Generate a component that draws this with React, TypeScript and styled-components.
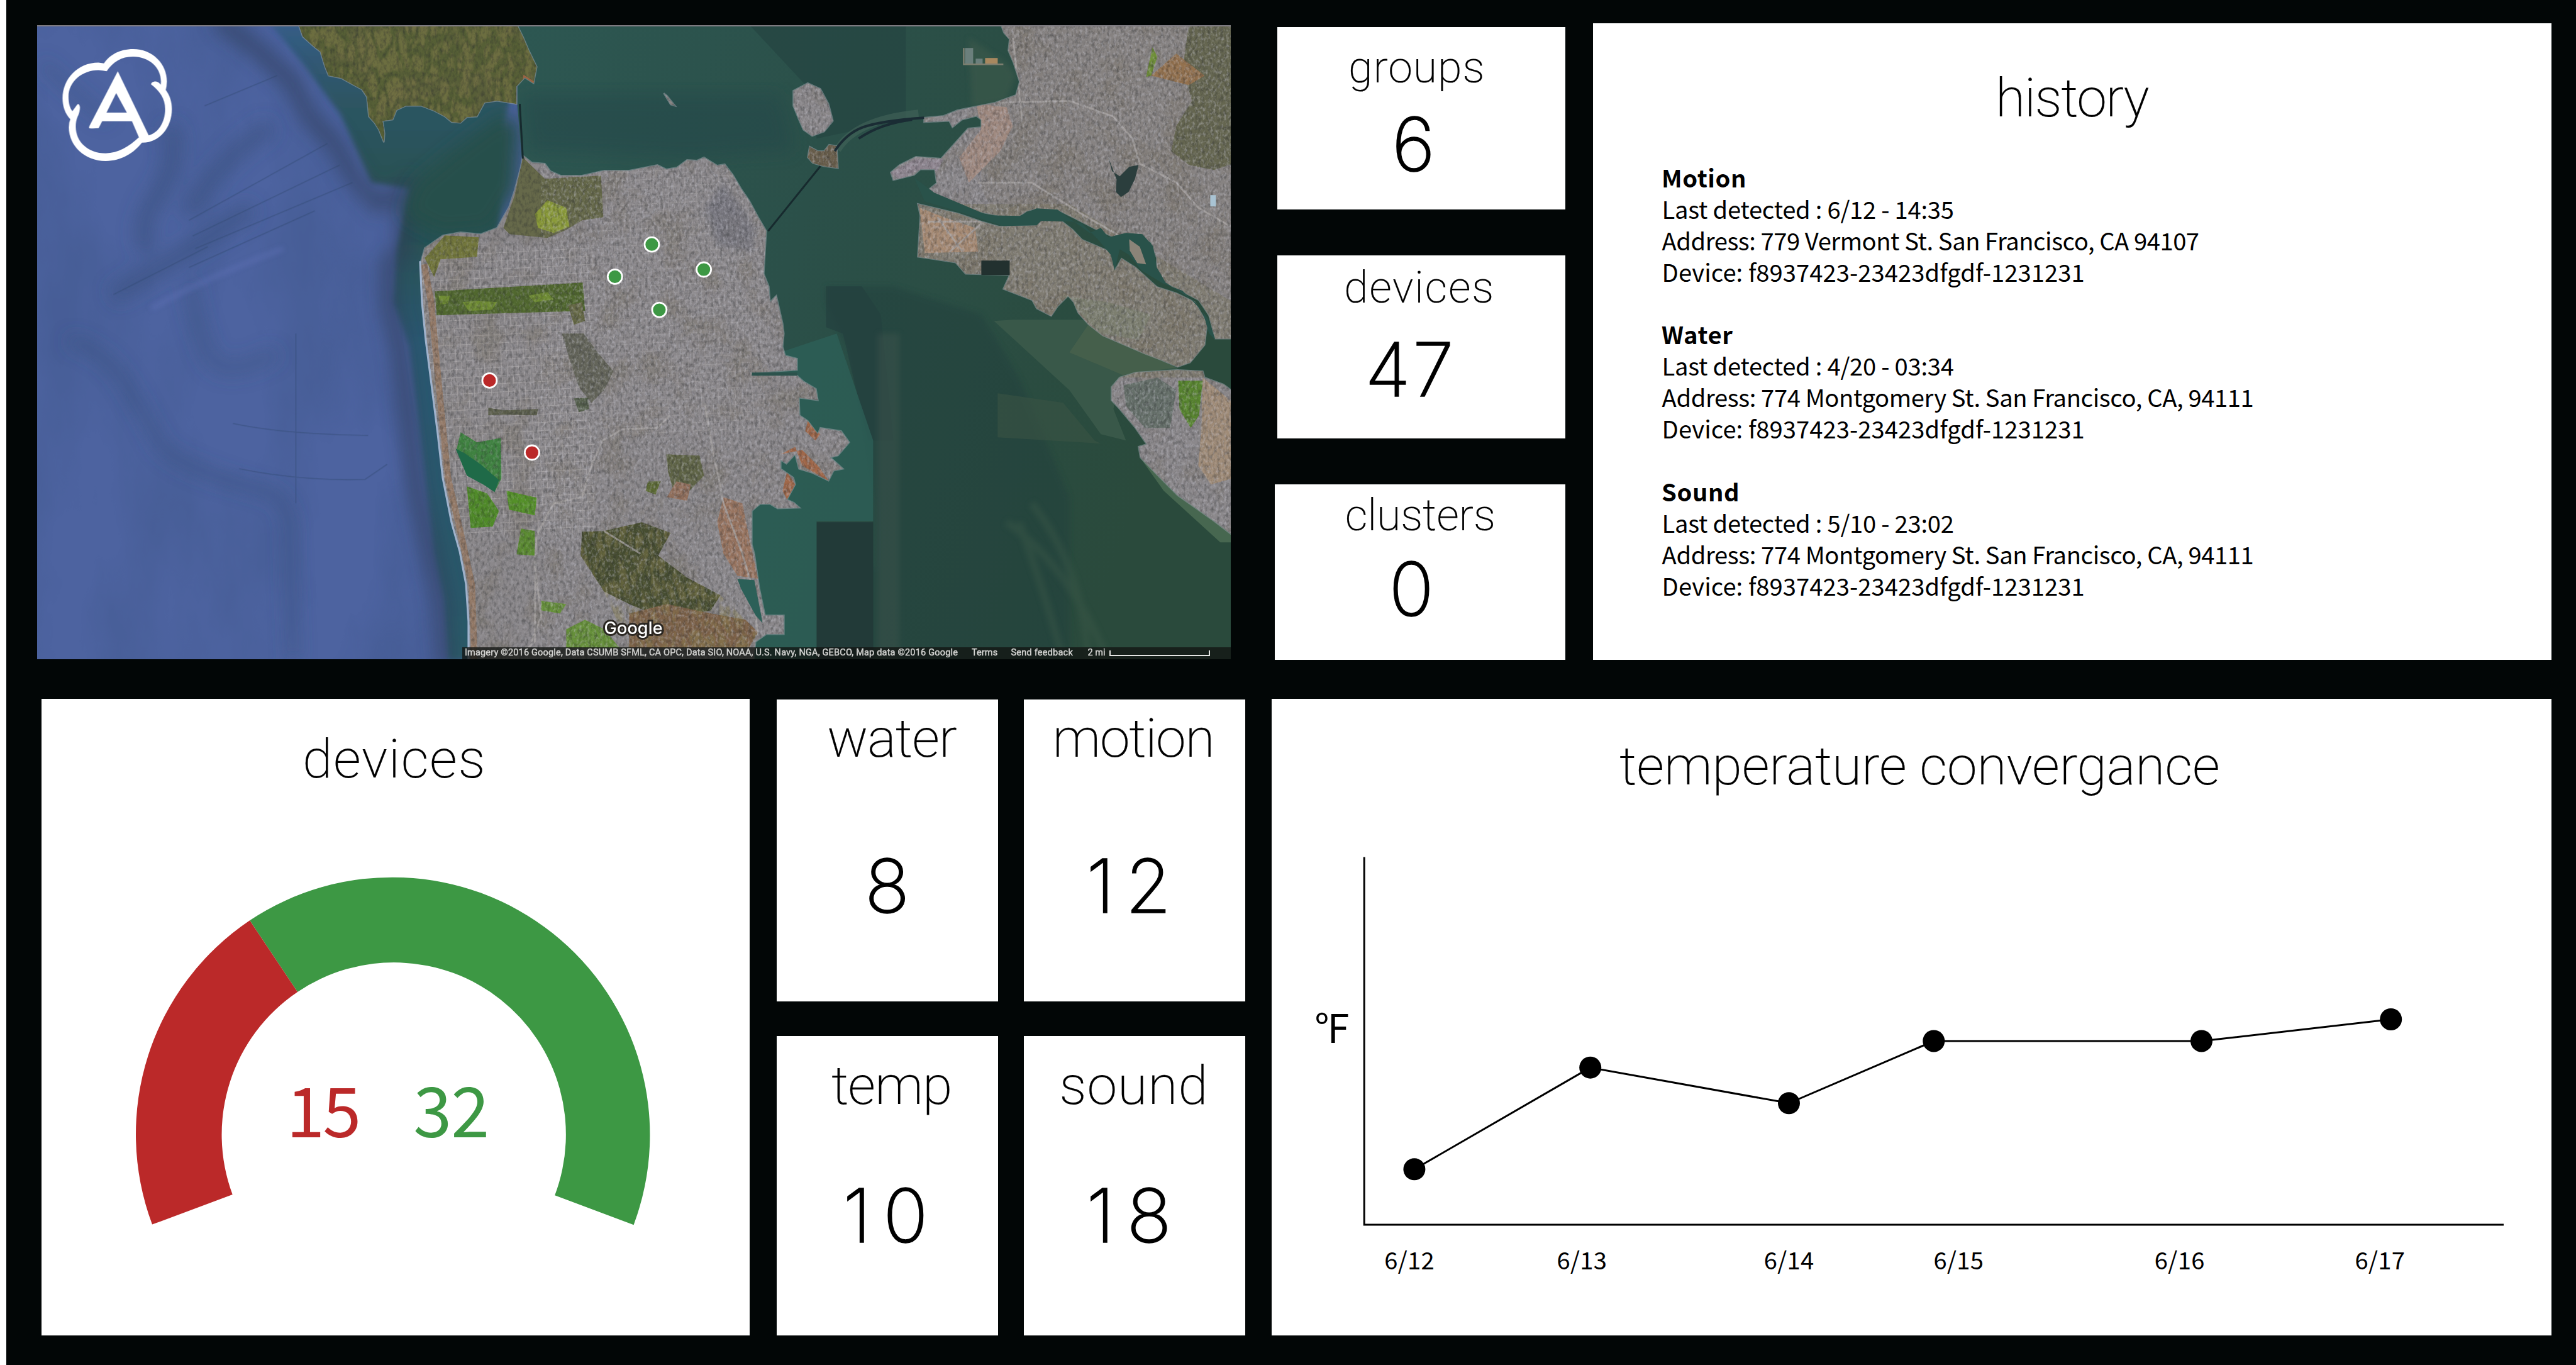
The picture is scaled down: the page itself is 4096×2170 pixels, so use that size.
import React from "react";
import styled, { createGlobalStyle } from "styled-components";

const INK = "#000000";
const FRAME = "#020606";
const RED = "#bb2929";
const GREEN = "#3d9844";
const THIN = `Roboto, "Liberation Sans", sans-serif`;
const BODY = `"Noto Sans CJK SC", "Open Sans", sans-serif`;

const GlobalStyle = createGlobalStyle`
  * { box-sizing: border-box; }
  html, body { margin: 0; padding: 0; background: #fff; }
  svg { display: block; }
`;

/* ---------- layout ---------- */

const Page = styled.main`
  width: 4096px;
  height: 2170px;
  overflow: hidden;
  display: flex;
  flex-direction: column;
  gap: 61.7px;
  padding: 37.4px 39.1px 0 48.6px;
  border-left: 10px solid #fff;
  background: ${FRAME};
  color: ${INK};
`;

const TopRow = styled.section`
  display: grid;
  grid-template-columns: 1898.5px 532.1px 1fr;
  height: 1011.7px;
`;

const BottomRow = styled.section`
  display: grid;
  grid-template-columns: 1125.7px 745.7px 2035.3px;
  column-gap: 42px;
  height: 1012px;
  padding-left: 7.6px;
`;

const Card = styled.article`
  display: flex;
  flex-direction: column;
  min-width: 0;
  background: #fff;
`;

const StatColumn = styled.div`
  display: flex;
  flex-direction: column;
  justify-content: space-between;
  padding: 5.8px 0 0 70px;
`;

const StatCard = styled(Card)<{ $height: number; $inset: number }>`
  height: ${p => p.$height}px;
  margin-left: ${p => p.$inset}px;
`;

const HistoryCard = styled(Card)`
  margin-left: 43.9px;
`;

const TileGrid = styled.div`
  display: grid;
  grid-template-columns: 352px 352px;
  grid-template-rows: 480px 476px;
  justify-content: space-between;
  align-content: space-between;
  padding: 1px 0 0 1px;
`;

/* ---------- type ---------- */

const Label = styled.h2<{ $top: number; $left: number; $track?: number; $small?: boolean }>`
  margin: ${p => p.$top}px 0 0 ${p => p.$left}px;
  font: 200 ${p => (p.$small ? 70 : 86)}px/1 ${THIN};
  letter-spacing: ${p => p.$track ?? 0}px;
  -webkit-text-stroke: 0.2px ${INK};
  white-space: nowrap;
`;

const Value = styled.p<{ $top: number; $left: number; $track: number }>`
  margin: ${p => p.$top}px 0 0 ${p => p.$left}px;
  font: 250 118px/1 Inter, "Liberation Sans", sans-serif;
  letter-spacing: ${p => p.$track}px;
  -webkit-text-stroke: 1.6px ${INK};
  white-space: nowrap;
`;

const EventList = styled.ul`
  list-style: none;
  display: flex;
  flex-direction: column;
  gap: 49.93px;
  margin: 57.4px 0 0 109.5px;
  padding: 0;
`;

const Event = styled.li`
  font: 400 38.2px/49.93px ${BODY};
  white-space: nowrap;
`;

const EventName = styled.h3`
  margin: 0 0 0 -0.5px;
  font-size: inherit;
  font-weight: 700;
  letter-spacing: 0.6px;
`;

const EventLine = styled.p<{ $track: number }>`
  margin: 0;
  letter-spacing: ${p => p.$track}px;
`;

/* ---------- map ---------- */

const MapPanel = styled.div`
  position: relative;
  height: 1007.8px;
  margin-top: 2.4px;
  overflow: hidden;
  border-top: 2px solid #7d7a80;
  background: #4d639f;
`;

const MapArt = styled.svg`
  position: absolute;
  inset: -2px 0 0 0;
  width: 1898.5px;
  height: 1007.8px;
`;

const MapFooter = styled.div`
  position: absolute;
  right: 0;
  bottom: 0;
  width: 1221.7px;
  height: 18.3px;
  display: flex;
  align-items: center;
  padding-left: 3.5px;
  background: rgba(18, 20, 18, 0.78);
  color: #d4d4d2;
  font: 400 14.5px/18px Roboto, sans-serif;
  -webkit-text-stroke: 0.4px #d4d4d2;
  white-space: nowrap;
`;

const Credit = styled.span`
  width: 806px;
  letter-spacing: 0.19px;
`;
const Terms = styled.span`
  width: 62.6px;
  letter-spacing: 0.13px;
`;
const Feedback = styled.span`
  width: 122px;
  letter-spacing: 0.23px;
`;
const Scale = styled.span`
  width: 34px;
`;
const ScaleBar = styled.span`
  width: 160px;
  height: 9px;
  border: 2px solid #e4e4e2;
  border-top: 0;
`;

const MapBrand = styled.span`
  position: absolute;
  left: 902px;
  top: 943px;
  font: 500 27px/1 Inter, sans-serif;
  letter-spacing: 0.15px;
  color: #fff;
  paint-order: stroke fill;
  -webkit-text-stroke: 6px #2b2722;
`;

const SF =
  "M831 247L828 264 818 302 809 329 790 362 764 372 732 369 704 374 675 394 669 415 672 480 678 540 688 618 697 689 705 759 719 830 732 876 742 928 746 988 746 1048H1198L1201 1020 1218 1008H1246V978H1216L1207 935 1199 880 1195 865V812L1208 801H1224L1236 808 1271 807 1262 799 1251 794 1264 770 1261 759 1241 745V731L1250 737 1264 722 1270 745 1290 751 1317 764 1325 748 1340 745 1320 727 1332 724 1350 703 1337 685 1304 680 1300 690 1284 669 1271 660 1270 632 1300 636 1297 618 1277 606 1267 597 1201 596V592L1267 588V570L1248 565 1244 551 1246 530 1244 514 1234 470 1224 480 1222 455 1214 435 1218 367 1205 345 1191 319 1178 300 1165 278 1152 261 1140 263 1119 250 1108 255 1092 254 1076 266 1059 269 1045 262 1000 271 960 271 925 279 891 279 875 272 866 260 845 258Z";
const MARIN =
  "M474 38L481 58 500 75 509 82 516 105 522 120 542 124 560 134 575 142 583 154 586 185 595 195 602 206 610 226 611 212 608 192 624 190 630 175 645 168 669 168 690 176 707 185 718 194 732 195 742 186 758 185 770 163 790 160 821 165 821 137 834 123 848 132 853 106 840 79 831 58 821 38Z";
const EAST =
  "M1591 38L1596 52 1605 62 1603 80 1611 99 1621 130 1615 151 1582 163 1522 175 1500 184 1469 187V194L1509 192 1514 202 1529 190 1552 184 1560 190V202L1539 204 1496 252 1456 249 1430 262 1416 274 1420 286 1453 278 1463 269 1486 269 1489 291 1469 307 1510 322 1555 336 1590 343 1621 343 1632 335 1648 331 1681 333 1707 346 1740 363 1780 381 1813 377 1830 385 1839 410V425L1853 449 1906 477 1922 501 1932 538H1960V38Z";
const ALAMEDA =
  "M1459 324L1522 339 1560 352 1588 360 1648 358 1654 350 1687 351 1705 365 1720 381 1767 401 1773 429 1783 411 1805 425 1839 456 1870 466 1899 480 1919 514 1915 548 1892 576 1872 583 1846 572 1820 562 1753 533 1730 515 1714 497 1707 480 1698 470 1681 487 1671 502 1648 490 1641 477 1595 459 1605 437 1535 435 1519 417 1459 408 1463 343Z";
const AIRPORT =
  "M1767 615L1780 600 1806 592 1872 588 1912 590 1915 600 1945 611 1960 622V851L1930 828 1872 787 1840 755 1813 727 1810 710 1823 706 1805 680 1780 650 1767 636Z";
const TREASURE =
  "M1284 132L1304 141 1317 165 1324 192 1310 209 1291 216 1277 206 1270 190 1261 168 1261 144ZM1287 233L1300 240 1310 240 1318 230 1330 232 1332 267 1310 264 1292 259 1284 250ZM1055 148L1060 152 1073 168 1066 166Z";
const ESTUARY =
  "M1453 282L1485 306 1530 325 1570 342 1621 343 1648 331 1681 333 1702 348 1732 370 1750 362 1762 377 1790 370 1816 372 1833 391 1839 425 1853 449 1900 480 1920 505 1932 540 1922 530 1912 495 1880 462 1848 450 1815 430 1795 405 1780 396 1772 430 1766 405 1745 380 1720 355 1705 352 1655 351 1648 358 1595 359 1530 338 1470 320Z";

const LAND = [SF, MARIN, EAST, ALAMEDA, AIRPORT, TREASURE].join("");

const MAP_GREENS: [string, string][] = [
  ["#66694a", "M831 250L866 284 900 282 955 279 959 345 925 350 900 365 870 378 810 372 800 362 818 310Z"],
  ["#8a9a3a", "M850 340L870 318 900 330 905 360 880 370 855 362Z"],
  ["#72763c", "M707 374L761 377 758 408 700 412 690 440 675 410Z"],
  ["#51682f", "M691 463L926 449 930 494 694 501Z"],
  ["#6f8c33", "M735 480L760 478 790 480 782 492 745 494ZM697 470L715 470 712 482 700 484ZM840 470L870 464 880 476 850 480Z"],
  ["#3f8240", "M732 687L758 703 796 696 797 760 786 782 752 756 726 713Z"],
  ["#4f8a28", "M742 773L774 784 793 812 783 837 748 839Z"],
  ["#549028", "M805 780L853 791 850 819 809 810Z"],
  ["#5a8a30", "M828 840L850 844V883L821 881Z"],
  ["#5c5f4c", "M776 648L800 652 855 650 853 660 800 659 776 660Z"],
  ["#64655a", "M893 530L928 530 950 560 975 590 960 620 940 640 920 615 905 570Z"],
  ["#55604c", "M912 633L935 632 936 650 920 655Z"],
  ["#656845", "M903 485L925 480 930 510 912 516Z"],
  ["#5f6446", "M1059 722L1112 724 1119 756 1092 784 1070 778 1062 750Z"],
  ["#5c6a34", "M1030 765L1050 765 1042 786 1026 780Z"],
  ["#93705c", "M1075 765L1098 770 1092 796 1060 790Z"],
  ["#474e31", "M925 845L960 844 1020 830 1066 847 1046 883 1092 918 1145 946 1130 970 1060 985 1000 960 960 940 923 883Z"],
  ["#7c6148", "M1000 975L1060 960 1130 975 1185 985 1205 1005 1190 1030H1000Z"],
  ["#66903a", "M900 1000L930 985 960 1000 985 1030H900ZM860 955L900 960 890 975 860 970Z"],
  ["#997560", "M1150 790L1180 800 1194 870 1205 920 1172 915 1150 880 1140 830Z"],
  ["#a0684a", "M1241 722L1264 710 1275 740 1317 764 1300 740 1275 715ZM1251 750L1264 770 1251 794 1244 780ZM1284 669L1304 690 1296 700 1280 685Z"],
  ["#a08c78", "M1912 600L1960 640V760L1925 770 1905 740 1910 680Z"],
  ["#58852f", "M1873 605L1912 605 1906 660 1893 680 1875 650Z"],
  ["#66706a", "M1786 612L1840 600 1870 620 1860 680 1820 680 1790 645Z"],
  ["#a78b74", "M1462 330L1500 345 1550 362 1555 400 1470 402Z"],
  ["#a08a80", "M1552 165L1600 170 1610 200 1590 240 1540 290 1525 250 1560 205Z"],
  ["#8f8690", "M1416 274L1456 252 1500 252 1490 272 1460 270 1430 285Z"],
  ["#656650", "M1890 38H1960V260L1930 270 1890 262 1862 240 1870 200 1895 160 1880 110Z"],
  ["#93714e", "M1830 120L1870 85 1915 120 1890 135Z"],
  ["#6f8f38", "M1832 75L1840 90 1830 120 1822 122Z"],
  ["#7d7f70", "M1690 470L1760 480 1830 500 1810 540 1750 530Z"],
];

const ROADS =
  "M828 1040L850 1020 851 880 853 850 880 800 925 790 940 740 958 700 990 682 1045 680 1065 660M1590 163L1700 160 1770 185 1800 220 1812 260 1870 290 1905 330 1957 360M1555 290L1640 290 1720 340 1780 375 1835 400M1205 1010L1195 930 1180 880 1150 800 1130 700 1120 640M1610 60L1625 190M960 844L1018 880M1490 345L1530 400M1560 355L1510 400M1475 352H1570M845 1020L860 980 850 900";

const PINS: { x: number; y: number; alert?: boolean }[] = [
  { x: 977.4, y: 439.6 },
  { x: 1036, y: 388.5 },
  { x: 1118.7, y: 428.3 },
  { x: 1048, y: 492.4 },
  { x: 778, y: 604.7, alert: true },
  { x: 845.5, y: 719.3, alert: true },
];

function SatelliteMap() {
  return (
    <MapArt viewBox="58.6 39.8 1898.5 1007.8" preserveAspectRatio="none">
      <defs>
        <linearGradient id="bay" x1="0" x2="1" y1="0" y2="0.3">
          <stop offset="0" stopColor="#2d5752" />
          <stop offset="0.45" stopColor="#2b5049" />
          <stop offset="1" stopColor="#2a4a3c" />
        </linearGradient>
        <linearGradient id="strait" x1="0" x2="0" y1="0" y2="1">
          <stop offset="0" stopColor="#355d86" />
          <stop offset="0.12" stopColor="#2d5563" />
          <stop offset="0.3" stopColor="#28504f" />
          <stop offset="0.5" stopColor="#2b5871" />
          <stop offset="1" stopColor="#2a5a68" />
        </linearGradient>
        <filter id="soft" x="-20%" y="-20%" width="140%" height="140%">
          <feGaussianBlur stdDeviation="14" />
        </filter>
        <filter id="softer" x="-20%" y="-20%" width="140%" height="140%">
          <feGaussianBlur stdDeviation="4" />
        </filter>
        <filter id="grainDark" x="0" y="0" width="100%" height="100%" colorInterpolationFilters="sRGB">
          <feTurbulence type="fractalNoise" baseFrequency="0.2 0.13" numOctaves="4" seed="4" />
          <feColorMatrix values="0 0 0 0 0.16  0 0 0 0 0.17  0 0 0 0 0.18  2.2 0 0 0 -0.95" />
        </filter>
        <filter id="grainLight" x="0" y="0" width="100%" height="100%" colorInterpolationFilters="sRGB">
          <feTurbulence type="fractalNoise" baseFrequency="0.24 0.17" numOctaves="4" seed="11" />
          <feColorMatrix values="0 0 0 0 0.78  0 0 0 0 0.78  0 0 0 0 0.82  0 2.6 0 0 -1.2" />
        </filter>
        <filter id="patches" x="0" y="0" width="100%" height="100%" colorInterpolationFilters="sRGB">
          <feTurbulence type="fractalNoise" baseFrequency="0.02 0.018" numOctaves="5" seed="8" />
          <feColorMatrix values="0 0 0 0 0.42  0 0 0 0 0.38  0 0 0 0 0.3  0 0 4 0 -1.9" />
        </filter>
        <filter id="ridges" x="0" y="0" width="100%" height="100%" colorInterpolationFilters="sRGB">
          <feTurbulence type="turbulence" baseFrequency="0.06 0.025" numOctaves="3" seed="21" />
          <feColorMatrix values="0 0 0 0 0.56  0 0 0 0 0.52  0 0 0 0 0.32  4 0 0 0 -0.7" />
        </filter>
        <filter id="swell" x="0" y="0" width="100%" height="100%" colorInterpolationFilters="sRGB">
          <feTurbulence type="fractalNoise" baseFrequency="0.007 0.003" numOctaves="5" seed="3" />
          <feColorMatrix values="0 0 0 0 0.2  0 0 0 0 0.3  0 0 0 0 0.47  2.4 0 0 0 -1" />
        </filter>
        <pattern id="streets" width="9" height="13" patternUnits="userSpaceOnUse" patternTransform="rotate(-3)">
          <path d="M0 0H9M0 0V13" stroke="#b9b5b6" strokeWidth="1.8" fill="none" opacity="0.55" />
        </pattern>
        <clipPath id="land">
          <path d={LAND} />
        </clipPath>
        <clipPath id="hills">
          <path d={MARIN} />
          <path d="M925 845L960 844 1020 830 1066 847 1046 883 1092 918 1145 946 1205 1005 1190 1030H1000L960 940 923 883Z" />
        </clipPath>
        <clipPath id="ocean">
          <path d="M58 38H480L640 330 640 540 700 900 712 1050H58Z" />
        </clipPath>
      </defs>

      <rect x="58" y="38" width="1900" height="1012" fill="#4d63a0" />
      <g clipPath="url(#ocean)">
        <rect x="58" y="38" width="1900" height="1012" filter="url(#swell)" opacity="0.22" />
        <g filter="url(#soft)" fill="none" stroke="#3a5280">
          <path d="M66 100Q120 150 170 190" strokeWidth="14" opacity="0.5" />
          <path d="M270 200Q285 260 250 310T235 400 M300 340Q340 260 430 200 M180 470Q300 400 400 330" strokeWidth="26" opacity="0.7" />
          <path d="M110 540Q170 560 200 610T250 700T420 780Q460 790 460 850T466 1048" strokeWidth="14" opacity="0.75" />
          <path d="M300 450Q310 510 330 560T440 560" strokeWidth="24" opacity="0.45" />
        </g>
        <g stroke="#334b74" fill="none" strokeWidth="1.6" opacity="0.5">
          <path d="M325 168L440 120M300 350L520 228M306 375L540 262M310 395L560 290M300 425L500 335M180 468L330 392M470 530V800M370 673Q450 690 585 692M380 745Q480 765 580 762L615 738" />
        </g>
        <path d="M240 490Q330 440 450 395" stroke="#6474bb" strokeWidth="7" opacity="0.5" fill="none" filter="url(#softer)" />
      </g>

      <path
        d="M430 38L480 100 540 180 590 290 650 300 630 400 625 480 650 551 668 700 690 880 705 953 712 1050H760L800 200 840 38Z"
        fill="url(#strait)"
        filter="url(#softer)"
      />
      <path
        d="M345 30L405 75 465 130 490 185 530 225 562 280 600 325 645 300 640 400 618 420 620 490 634 550 645 640 662 777 685 883 700 953 708 1060"
        fill="none"
        stroke="#2f3d58"
        strokeWidth="28"
        opacity="0.6"
        filter="url(#soft)"
      />
      <path d="M640 340L660 290 720 240 800 180 826 200 820 300 780 365 700 372Z" fill="#28504b" filter="url(#soft)" />
      <path d="M822 38H1960V1050H1190L1150 700 1100 320 840 320 829 246 822 165Z" fill="url(#bay)" />
      <path d="M1190 38L1290 145 1298 220 1440 190V38Z" fill="#254541" opacity="0.7" />
      <path d="M830 150H1240L1262 240 1100 250 840 240Z" fill="#22444a" opacity="0.45" filter="url(#soft)" />
      <path d="M1313 455H1420L1560 500 1620 600 1700 790V1048H1298V900H1390V800L1350 560 1313 480Z" fill="#24403c" opacity="0.5" filter="url(#softer)" />
      <path d="M1313 455H1370L1400 500 1420 700H1380L1340 530 1313 520Z" fill="#23403f" opacity="0.7" />
      <path d="M1298 830H1388V1048H1298Z" fill="#223a38" />
      <path d="M1240 560L1330 530 1388 700V828H1298V1048H1190V800Z" fill="#2d6058" opacity="0.75" />
      <path d="M1395 530H1430V1048H1395Z" fill="#43564f" opacity="0.4" filter="url(#softer)" />
      <path d="M1586 625L1690 640 1740 700 1750 705 1586 695Z" fill="#3b5344" opacity="0.6" />
      <path d="M1580 510L1610 508H1730L1870 584 1890 600 1780 600 1770 650 1790 700 1750 690 1700 620Z" fill="#3b5a4a" opacity="0.9" />
      <path d="M1730 516L1870 584 1785 596 1700 560Z" fill="#52664e" opacity="0.5" />
      <path d="M1813 728L1960 852V862H1940L1850 780Z" fill="#4a6a52" opacity="0.9" />
      <path d="M1600 830Q1700 900 1760 1048M1620 830Q1660 940 1690 1048M1640 800Q1720 900 1730 1048" stroke="#3c5a4a" strokeWidth="12" fill="none" opacity="0.4" filter="url(#softer)" />
      <path d="M1540 60L1545 170 1600 160 1615 120 1600 100Z" fill="#3c5a4c" opacity="0.6" filter="url(#softer)" />
      <path d="M1331 238Q1360 190 1460 180" stroke="#42645a" strokeWidth="12" fill="none" opacity="0.6" />
      <path d="M1534 76H1547V101H1534ZM1551 93H1562V101H1551Z" fill="#6b7f7c" />
      <path d="M1566 92H1586V102H1566Z" fill="#a8885f" />
      <path d="M1532 76V102H1595" fill="none" stroke="#7d7f70" strokeWidth="2.5" />

      <path d={LAND} fill="none" stroke="#8f9aa0" strokeWidth="2.5" opacity="0.6" />
      <path d="M669 415L672 480 678 540 688 618 697 689 705 759 719 830 732 876 742 928 746 988V1048" fill="none" stroke="#9fb2cc" strokeWidth="6" />
      <g clipPath="url(#land)">
        <path d={LAND} fill="#8b888b" />
        <path d={MARIN} fill="#565f36" />
        <path d="M1560 38H1960V560H1700L1560 300Z" fill="#878382" />
        <path d="M1459 324H1700L1960 480V600H1700L1459 420Z" fill="#827e74" />
        <rect x="665" y="390" width="280" height="460" fill="url(#streets)" />
        <rect x="950" y="270" width="270" height="420" fill="url(#streets)" opacity="0.6" />
        <rect x="58" y="38" width="1900" height="1012" filter="url(#patches)" opacity="0.22" />
        {MAP_GREENS.map(([fill, d]) => (
          <path key={d} d={d} fill={fill} />
        ))}
        <path d="M1284 225H1340V272H1280Z" fill="#6a5f4c" />
        <path d="M674 420L685 480 700 640 712 760 735 860 750 930 754 1048" stroke="#96775f" strokeWidth="10" fill="none" opacity="0.8" />
        <g clipPath="url(#hills)">
          <rect x="450" y="38" width="800" height="1012" filter="url(#ridges)" opacity="0.4" />
        </g>
        <path d="M1120 330L1150 290 1200 360 1195 400 1140 390Z" fill="#73737d" opacity="0.7" filter="url(#softer)" />
        <path d={ROADS} stroke="#aaa6a4" strokeWidth="3" fill="none" opacity="0.75" />
        <rect x="58" y="38" width="1900" height="1012" filter="url(#grainDark)" opacity="0.42" />
        <rect x="860" y="38" width="1100" height="1012" filter="url(#grainLight)" opacity="0.42" />
        <rect x="665" y="380" width="195" height="668" filter="url(#grainLight)" opacity="0.25" />
        <path d="M830 166L834 123 848 132" fill="none" stroke="#9a6445" strokeWidth="5" />
      </g>
      <path d={ESTUARY} fill="#29524a" />
      <path d="M724 713L738 720 764 738 793 763 786 782 768 770 742 756Z" fill="#1f6a48" />
      <path d="M1795 380L1812 392 1822 420 1808 418 1796 398Z" fill="#8b8478" />
      <path d="M1560 414H1605V437H1560Z" fill="#22312f" />
      <path d="M1762 250L1768 272 1780 280 1795 265 1810 262 1804 285 1794 305 1782 313 1774 305 1775 285Z" fill="#2b3e3d" />
      <path d="M1924 310H1933V328H1924Z" fill="#a9c3d3" />
      <path d="M1195 592H1267V597H1195Z" fill="#2c524c" />
      <path d="M1172 920L1199 922 1210 978 1212 990 1201 978 1178 936Z" fill="#2c6058" />
      <path d="M826 165L831 252M1304 264L1221 367" stroke="#172a2e" strokeWidth="3" fill="none" />
      <path d="M1327 240Q1345 212 1372 202T1469 187M1365 220Q1400 196 1450 190" stroke="#1a2c34" strokeWidth="4" fill="none" />

      {PINS.map(p => (
        <circle key={`${p.x}`} cx={p.x} cy={p.y} r="11.5" fill={p.alert ? RED : GREEN} stroke="#fff" strokeWidth="2.8" />
      ))}

      <g transform="translate(84.5 61.4) scale(.256)" fill="#fff" fillRule="evenodd">
        <path d="M105 500C72 465 57 420 57 370C57 250 150 148 280 148L314 153C350 98 415 64 495 64C615 64 705 155 705 265Q704 295 698 318C722 350 736 390 736 437C736 550 660 645 555 645H550C500 710 420 759 325 759C195 759 96 665 96 550Q96 520 105 500ZM331 202C370 145 420 111 495 111C590 111 668 175 668 265L667 286C655 268 640 264 628 265C615 268 606 275 606 283C660 325 694 370 694 437C694 520 650 585 592 600L531 612C470 670 400 711 325 711C215 711 139 640 139 545Q139 510 150 485Q165 455 165 425Q160 398 148 409L118 450C102 430 94 400 94 360C94 265 180 195 280 195Q310 197 331 202Z" />
        <path d="M400 202L592 600 560 642 531 612 488 512H303L281 555Q250 558 222 556Q220 550 225 540ZM390 337L456 459H330Z" />
      </g>
    </MapArt>
  );
}

/* ---------- charts ---------- */

const GaugeArt = styled.svg`
  width: 1125.7px;
  height: 872.1px;
`;

const TrendArt = styled.svg`
  width: 2035.3px;
  height: 861.6px;
`;

const ArtText = styled.text<{ $size: number; $track?: number }>`
  font: 400 ${p => p.$size}px ${BODY};
  letter-spacing: ${p => p.$track ?? 0}px;
`;

function Gauge() {
  return (
    <GaugeArt viewBox="66.2 1250.7 1125.7 872.1">
      <path
        fill={GREEN}
        d="M397.3 1463.9A409.5 409.5 0 0 1 1007.8 1948L882.4 1900.9A273.5 273.5 0 0 0 473.3 1577.7Z"
      />
      <path
        fill={RED}
        d="M242.2 1947.3A409.5 409.5 0 0 1 397.3 1463.9L473.3 1577.7A273.5 273.5 0 0 0 369.9 1899.8Z"
      />
      <ArtText x="455.5" y="1808.7" $size={110} $track={-3} fill={RED}>15</ArtText>
      <ArtText x="657.5" y="1808.7" $size={110} $track={-1} fill={GREEN}>32</ArtText>
    </GaugeArt>
  );
}

const SERIES = [
  { x: 2248.5, y: 1859, day: "6/12", at: 2200.8 },
  { x: 2528.3, y: 1697.4, day: "6/13", at: 2475 },
  { x: 2844.1, y: 1754, day: "6/14", at: 2804.3 },
  { x: 3074.4, y: 1655.2, day: "6/15", at: 3074 },
  { x: 3500.1, y: 1655.2, day: "6/16", at: 3425.4 },
  { x: 3801.3, y: 1620.7, day: "6/17", at: 3744 },
];

function Trend() {
  return (
    <TrendArt viewBox="2021.6 1261.2 2035.3 861.6">
      <path d="M2168.8 1362.8V1947.3H3980.6" fill="none" stroke={INK} strokeWidth="3" />
      <polyline points={SERIES.map(s => `${s.x},${s.y}`).join(" ")} fill="none" stroke={INK} strokeWidth="3" />
      {SERIES.map(s => (
        <circle key={s.day} cx={s.x} cy={s.y} r="17.5" />
      ))}
      {SERIES.map(s => (
        <ArtText key={s.day} x={s.at} y="2018.6" $size={38.2} $track={0.34}>
          {s.day}
        </ArtText>
      ))}
      <ArtText x="2089.8 2110" y="1658" $size={63}>°F</ArtText>
    </TrendArt>
  );
}

/* ---------- content ---------- */

const STATS = [
  { name: "groups", value: "6", height: 290, inset: 4.4, label: [29, 112.5, 0.9], at: [28, 181.5, 0] },
  { name: "devices", value: "47", height: 291, inset: 4.4, label: [16, 105.5, 1.6], at: [35.5, 139, 3.6] },
  { name: "clusters", value: "0", height: 279, inset: 0, label: [14, 111.7, -0.2], at: [23, 181.5, 0] },
];

const TILES = [
  { name: "water", value: "8", label: [19, 80.3, -1], at: [132.5, 140, 0] },
  { name: "motion", value: "12", label: [19, 46, -1.4], at: [132.5, 100, 17] },
  { name: "temp", value: "10", label: [36, 87, -0.9], at: [104.5, 105.5, 19] },
  { name: "sound", value: "18", label: [36, 57, 0.9], at: [104.5, 100, 19] },
];

const EVENTS = [
  { name: "Motion", when: "6/12 - 14:35", address: "779 Vermont St. San Francisco, CA 94107", track: -0.46 },
  { name: "Water", when: "4/20 - 03:34", address: "774 Montgomery St. San Francisco, CA, 94111", track: -0.39 },
  { name: "Sound", when: "5/10 - 23:02", address: "774 Montgomery St. San Francisco, CA, 94111", track: -0.39 },
];

export default function App() {
  return (
    <>
      <GlobalStyle />
      <Page>
        <TopRow>
          <MapPanel>
            <SatelliteMap />
            <MapBrand>Google</MapBrand>
            <MapFooter>
              <Credit>
                Imagery ©2016 Google, Data CSUMB SFML, CA OPC, Data SIO, NOAA, U.S. Navy, NGA, GEBCO, Map data ©2016 Google
              </Credit>
              <Terms>Terms</Terms>
              <Feedback>Send feedback</Feedback>
              <Scale>2 mi</Scale>
              <ScaleBar />
            </MapFooter>
          </MapPanel>
          <StatColumn>
            {STATS.map(s => (
              <StatCard key={s.name} $height={s.height} $inset={s.inset}>
                <Label $small $top={s.label[0]} $left={s.label[1]} $track={s.label[2]}>{s.name}</Label>
                <Value $top={s.at[0]} $left={s.at[1]} $track={s.at[2]}>{s.value}</Value>
              </StatCard>
            ))}
          </StatColumn>
          <HistoryCard>
            <Label $top={76} $left={640} $track={-1.5}>history</Label>
            <EventList>
              {EVENTS.map(e => (
                <Event key={e.name}>
                  <EventName>{e.name}</EventName>
                  <EventLine $track={-0.26}>Last detected : {e.when}</EventLine>
                  <EventLine $track={e.track}>Address: {e.address}</EventLine>
                  <EventLine $track={0.05}>Device: f8937423-23423dfgdf-1231231</EventLine>
                </Event>
              ))}
            </EventList>
          </HistoryCard>
        </TopRow>
        <BottomRow>
          <Card>
            <Label $top={53.4} $left={414.9} $track={1.6}>devices</Label>
            <Gauge />
          </Card>
          <TileGrid>
            {TILES.map(t => (
              <Card key={t.name}>
                <Label $top={t.label[0]} $left={t.label[1]} $track={t.label[2]}>{t.name}</Label>
                <Value $top={t.at[0]} $left={t.at[1]} $track={t.at[2]}>{t.value}</Value>
              </Card>
            ))}
          </TileGrid>
          <Card>
            <Label $top={64.4} $left={553.5} $track={-0.15}>temperature convergance</Label>
            <Trend />
          </Card>
        </BottomRow>
      </Page>
    </>
  );
}
